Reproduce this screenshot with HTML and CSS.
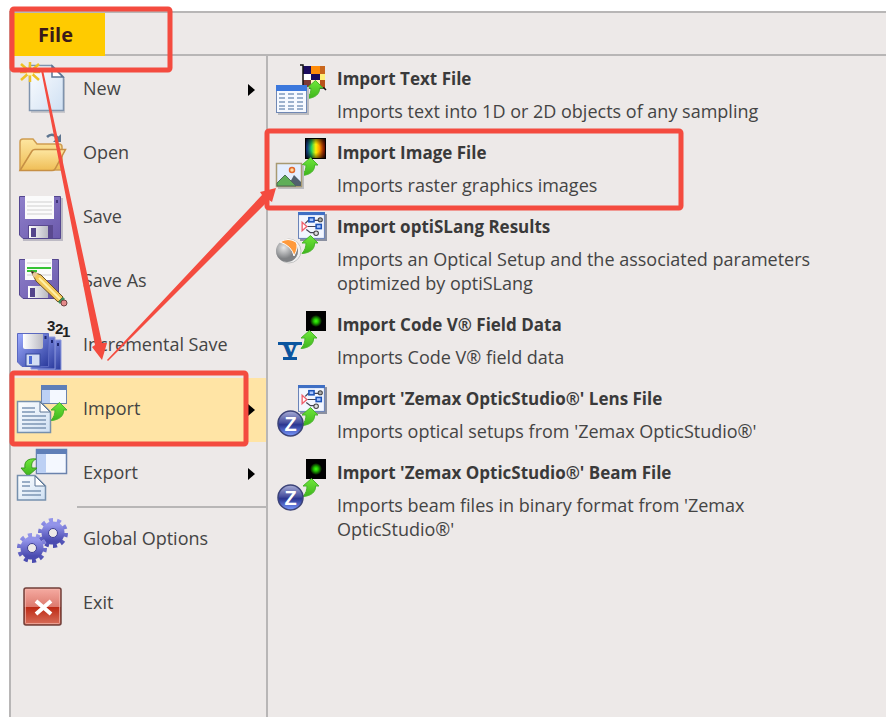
FILE: index.html
```html
<!DOCTYPE html>
<html lang="en">
<head>
  <meta charset="UTF-8" />
  <meta name="viewport" content="width=device-width, initial-scale=1.0"/>
  <title>File menu - Import</title>
  <link rel="stylesheet" href="styles.css">
</head>
<body>

  <!-- shared icon parts -->
  <svg class="defs" width="0" height="0" aria-hidden="true">
    <defs>
      <linearGradient id="green" x1="0" y1="0" x2="0" y2="1"><stop offset="0" stop-color="#6fe83a"/><stop offset="1" stop-color="#3fb41c"/></linearGradient>
      <linearGradient id="paper" x1="0" y1="0" x2="1" y2="1"><stop offset="0" stop-color="#fdfeff"/><stop offset="1" stop-color="#cfe0f3"/></linearGradient>
      <linearGradient id="folder" x1="0" y1="0" x2="0" y2="1"><stop offset="0" stop-color="#fde6a0"/><stop offset="1" stop-color="#efbd55"/></linearGradient>
      <linearGradient id="purple" x1="0" y1="0" x2="1" y2="1"><stop offset="0" stop-color="#8f80cb"/><stop offset="1" stop-color="#6a59ab"/></linearGradient>
      <linearGradient id="blue" x1="0" y1="0" x2="1" y2="1"><stop offset="0" stop-color="#9fadff"/><stop offset="1" stop-color="#2a3a9c"/></linearGradient>
      <linearGradient id="metal" x1="0" y1="0" x2="1" y2="0"><stop offset="0" stop-color="#ffffff"/><stop offset="1" stop-color="#b9b9c2"/></linearGradient>
      <linearGradient id="gearFill" x1="0" y1="0" x2="0" y2="1"><stop offset="0" stop-color="#9394ea"/><stop offset="1" stop-color="#4a4bb0"/></linearGradient>
      <linearGradient id="red" x1="0" y1="0" x2="0" y2="1"><stop offset="0" stop-color="#f6aca3"/><stop offset=".5" stop-color="#dd7b6f"/><stop offset=".52" stop-color="#bd2a15"/><stop offset="1" stop-color="#d9705c"/></linearGradient>
      <linearGradient id="zFill" x1="0" y1="0" x2="0" y2="1"><stop offset="0" stop-color="#a9aed6"/><stop offset=".45" stop-color="#4a52a0"/><stop offset=".55" stop-color="#2b3590"/><stop offset="1" stop-color="#7a9aff"/></linearGradient>
      <linearGradient id="rainbow" x1="0" y1="0" x2="1" y2="0"><stop offset="0" stop-color="#1b3fd8"/><stop offset=".28" stop-color="#1fd060"/><stop offset=".52" stop-color="#fff000"/><stop offset=".75" stop-color="#ff8a00"/><stop offset="1" stop-color="#d01800"/></linearGradient>
      <radialGradient id="vignette" r=".68"><stop offset=".3" stop-color="#000" stop-opacity="0"/><stop offset="1" stop-color="#000"/></radialGradient>
      <radialGradient id="glow"><stop offset="0" stop-color="#3dff10"/><stop offset=".35" stop-color="#22c400"/><stop offset="1" stop-color="#000"/></radialGradient>
      <radialGradient id="ball" cx=".35" cy=".35"><stop offset="0" stop-color="#e8e8e8"/><stop offset="1" stop-color="#7f8184"/></radialGradient>

      <symbol id="up-arrow" viewBox="0 0 18 19">
        <path d="M1 18.500C4 15 5 12 5 8H1L9.500 .5L17 8H13.500C14 14 9 18 1 18.500Z" fill="url(#green)" stroke="#48b52c" stroke-width="1"/>
      </symbol>
      <symbol id="spot" viewBox="0 0 20 20">
        <rect width="20" height="20" fill="#000"/>
        <circle cx="10" cy="10" r="6" fill="url(#glow)"/>
      </symbol>
      <symbol id="z-ball" viewBox="0 0 27 27">
        <circle cx="13.5" cy="13.5" r="12.5" fill="url(#zFill)" stroke="#3c4378" stroke-width="1.5"/>
        <text x="13.5" y="21" text-anchor="middle" class="z-letter">Z</text>
      </symbol>
      <symbol id="setup" viewBox="0 0 28 28">
        <rect x="2" y="2" width="26" height="26" fill="#8b90a0"/>
        <rect x=".5" y=".5" width="25" height="25" fill="#f2f6ff" stroke="#6b84b8"/>
        <rect width="26" height="3" fill="#3f6fc4"/>
        <path d="M7 11L10 8H20M9 14H20M8 17L12 20H17" fill="none" stroke="#445" stroke-width="1.2"/>
        <path d="M4 10V18L8.500 14Z" fill="#fff" stroke="#f0606c" stroke-width="1.3"/>
        <rect x="10.500" y="5.500" width="5" height="4" fill="#a9c6ff" stroke="#1c53b8" stroke-width="1.5"/>
        <rect x="17.500" y="12" width="5" height="4" fill="#a9c6ff" stroke="#1c53b8" stroke-width="1.5"/>
        <circle cx="21.5" cy="7.500" r="2" fill="#aaa" stroke="#444"/>
        <circle cx="17.5" cy="20.5" r="2.200" fill="#ddd" stroke="#444"/>
      </symbol>
      <symbol id="blue-disk" viewBox="0 0 32 34">
        <path d="M.5.5H31.5V33.5H5L.5 29Z" fill="url(#blue)" stroke="#5a68c0"/>
        <path d="M6 1H26V14Q26 16 24 16H8Q6 16 6 14Z" fill="url(#metal)"/>
        <rect x="27.500" y="3" width="2" height="3" fill="#1c2670"/>
        <rect x="9" y="21" width="14" height="12" fill="#d3def4" stroke="#35489c"/>
        <rect x="12" y="23" width="3" height="8" fill="#4c6bd6"/>
      </symbol>
      <symbol id="gear" viewBox="0 0 32 32">
        <circle cx="16" cy="16" r="12.5" fill="none" stroke="url(#gearFill)" stroke-width="5" pathLength="100" stroke-dasharray="5 5"/>
        <circle cx="16" cy="16" r="8" fill="none" stroke="url(#gearFill)" stroke-width="7"/>
        <circle cx="16" cy="16" r="4.5" fill="none" stroke="#3e3f94" stroke-width="1"/>
      </symbol>
    </defs>
  </svg>

  <div class="window">
    <header class="tab-bar">
      <button class="file-tab" type="button">File</button>
    </header>

    <div class="menu">
      <nav class="commands">
        <button class="command" type="button">
          <svg class="icon" viewBox="0 0 60 64">
            <path d="M18 9H40L52 21V55H18Z" fill="#c9c8cc"/>
            <path d="M16.500 7.500H39L50.500 19V52.500H16.500Z" fill="url(#paper)" stroke="#7f93ad" stroke-width="1.500"/>
            <path d="M39 8V19H50Z" fill="#fff" stroke="#5c7594" stroke-width="1.500"/>
            <path d="M17 4V24M7 14H27M8 6L26 22M26 6L8 22" stroke="#eec125" stroke-width="2.500"/>
            <circle cx="17" cy="14" r="3.500" fill="#fff6b8"/>
          </svg>
          <span class="label">New</span>
          <span class="more"></span>
        </button>
        <button class="command" type="button">
          <svg class="icon" viewBox="0 0 60 64">
            <path d="M7 48V20Q7 17 10 17H20L24 22H46Q49 22 49 25V48Z" fill="url(#folder)" stroke="#cf9d52" stroke-width="1.500"/>
            <path d="M7 48.500L19 29Q20 27.500 22 27.500H52.500L42 47Q41 48.500 39 48.500Z" fill="url(#folder)" stroke="#c79045" stroke-width="1.500"/>
            <path d="M34 15Q39 10 45 16" fill="none" stroke="#5d7590" stroke-width="2.500"/>
            <path d="M48 12V20H40Z" fill="#5d7590"/>
          </svg>
          <span class="label">Open</span>
        </button>
        <button class="command" type="button">
          <svg class="icon" viewBox="0 0 60 64">
            <path d="M8 12H50V55H10Z" fill="#bdbac4"/>
            <path d="M6.500 10.500H47.500V52.500H10L6.500 49Z" fill="url(#purple)" stroke="#54468f"/>
            <rect x="12" y="10" width="29" height="23" fill="#fbfbfb"/>
            <path d="M14 16H39M14 20H39M14 24H39M14 28H39" stroke="#cfcfcf"/>
            <rect x="15" y="39" width="25" height="13" fill="#5a498f"/>
            <rect x="16" y="40" width="19" height="12" fill="url(#metal)"/>
            <rect x="18" y="42" width="5" height="9" fill="#54458c"/>
            <rect x="43" y="14" width="2" height="3" fill="#41357a"/>
          </svg>
          <span class="label">Save</span>
        </button>
        <button class="command" type="button">
          <svg class="icon" viewBox="0 0 60 64">
            <path d="M6.500 9.500H45.500V48.500H10L6.500 45Z" fill="url(#purple)" stroke="#54468f"/>
            <rect x="12" y="9" width="27" height="21" fill="#fbfbfb"/>
            <path d="M14 13H38M14 25H38" stroke="#cfcfcf"/>
            <path d="M14 18H38M14 21H24" stroke="#35c335" stroke-width="2"/>
            <rect x="15" y="36" width="20" height="12" fill="url(#metal)"/>
            <rect x="17" y="38" width="5" height="9" fill="#54458c"/>
            <path d="M18 21L28 25L50 47L45 52L23 31Z" fill="#f3c95b" stroke="#6b5126"/>
            <path d="M26 28L47 49" stroke="#fff0a8" stroke-width="2"/>
            <path d="M18 21L25 23.500L21 28Z" fill="#e9c89a"/>
            <path d="M18 21L21 22L19.500 24Z" fill="#222"/>
            <path d="M45 52L50 47L52 49L47 54Z" fill="#3d8f5a"/>
            <circle cx="51" cy="53" r="3" fill="#e58a8a" stroke="#6e4040"/>
          </svg>
          <span class="label">Save As</span>
        </button>
        <button class="command" type="button">
          <svg class="icon" viewBox="0 0 60 64">
            <path d="M25 26H48V56H25Z" fill="url(#blue)" stroke="#8d99dc"/>
            <path d="M18 23H42V55H18Z" fill="url(#blue)" stroke="#8d99dc"/>
            <path d="M45 29V32M39 26V29" stroke="#1c2670" stroke-width="2"/>
            <use href="#blue-disk" x="4" y="19" width="32" height="34"/>
            <text x="34" y="17" class="digit">3</text>
            <text x="42" y="20" class="digit">2</text>
            <text x="49" y="23" class="digit">1</text>
          </svg>
          <span class="label">Incremental Save</span>
        </button>
        <button class="command active" type="button">
          <svg class="icon" viewBox="0 0 60 64">
            <rect x="28.500" y="7.500" width="25" height="18" fill="#f4f8ff" stroke="#6a82ad"/>
            <rect x="28" y="7" width="26" height="5" fill="#5f7fb8"/>
            <rect x="29" y="12" width="8" height="13" fill="#bcd0f4"/>
            <use href="#up-arrow" x="37" y="24" width="18" height="19"/>
            <path d="M4.500 23.500H27L37.500 34V54.500H4.500Z" fill="url(#paper)" stroke="#7690ad" stroke-width="1.500"/>
            <path d="M27 24V34H37Z" fill="#fff" stroke="#5c7594"/>
            <path d="M9 30H22M9 34H22M9 38H33M9 42H33M9 46H33M9 50H33" stroke="#7c95b4" stroke-width="1.500"/>
          </svg>
          <span class="label">Import</span>
          <span class="more"></span>
        </button>
        <button class="command" type="button">
          <svg class="icon" viewBox="0 0 60 64">
            <rect x="23.500" y="7.500" width="30" height="24" fill="#f4f8ff" stroke="#6a82ad" stroke-width="1.500"/>
            <rect x="23" y="7" width="31" height="5" fill="#5f7fb8"/>
            <rect x="24" y="12" width="9" height="19" fill="#bcd0f4"/>
            <path d="M23 17C14 16 11 20 12 26H8L15 34L24 26H19C18 22 19 19 23 17Z" fill="url(#green)" stroke="#3a9a22"/>
            <path d="M4.500 33.500H22L32.500 44V58H4.500Z" fill="url(#paper)" stroke="#7690ad" stroke-width="1.500"/>
            <path d="M22 34V44H32Z" fill="#fff" stroke="#5c7594"/>
            <path d="M9 40H17M9 44H17M9 49H28M9 53H28" stroke="#7c95b4" stroke-width="1.500"/>
          </svg>
          <span class="label">Export</span>
          <span class="more"></span>
        </button>
        <hr class="divider">
        <button class="command" type="button">
          <svg class="icon" viewBox="0 0 60 64">
            <use href="#gear" x="24" y="9" width="32" height="32"/>
            <use href="#gear" x="3" y="24" width="32" height="32"/>
          </svg>
          <span class="label">Global Options</span>
        </button>
        <button class="command" type="button">
          <svg class="icon" viewBox="0 0 60 64">
            <rect x="11" y="16" width="37" height="37" rx="2" fill="url(#red)" stroke="#71403a" stroke-width="1.500"/>
            <rect x="12.500" y="17.500" width="34" height="34" rx="1" fill="none" stroke="#f3b6ad" stroke-opacity=".7"/>
            <path d="M23 29L38 42M38 29L23 42" stroke="#fff" stroke-width="4"/>
          </svg>
          <span class="label">Exit</span>
        </button>
      </nav>

      <section class="imports">
        <button class="entry" type="button">
          <svg class="icon" viewBox="0 0 60 64">
            <rect x="31" y="8" width="8" height="8" fill="#1b0c5e"/>
            <rect x="39" y="8" width="9" height="8" fill="#ff8c0a"/>
            <rect x="48" y="8" width="5" height="8" fill="#c9661c"/>
            <rect x="31" y="16" width="8" height="6" fill="#fff"/>
            <rect x="39" y="16" width="9" height="6" fill="#1b0c5e"/>
            <rect x="48" y="16" width="5" height="6" fill="#fff07a"/>
            <rect x="31" y="22" width="8" height="8" fill="#7d3a34"/>
            <rect x="39" y="22" width="9" height="8" fill="#fff3c4"/>
            <rect x="48" y="22" width="5" height="8" fill="#b9541c"/>
            <path d="M28 7H31V28M31 30H52L54 32" fill="none" stroke="#111" stroke-width="1.500"/>
            <use href="#up-arrow" x="34" y="22" width="18" height="19"/>
            <rect x="6" y="29" width="31" height="28" fill="#bcbcc0"/>
            <rect x="4.500" y="27.500" width="30" height="27" fill="#f6f9ff" stroke="#7088b4"/>
            <rect x="4" y="27" width="31" height="6" fill="#3c78dc"/>
            <path d="M7 36H13M16 36H22M25 36H31M7 40H13M16 40H22M25 40H31M7 44H13M16 44H22M25 44H31M7 48H13M16 48H22M25 48H31M7 51H13M16 51H22M25 51H31" stroke="#7f99bd" stroke-width="1.500"/>
          </svg>
          <span class="entry-text">
            <strong class="entry-title">Import Text File</strong>
            <span class="entry-info">Imports text into 1D or 2D objects of any sampling</span>
          </span>
        </button>
        <button class="entry" type="button">
          <svg class="icon" viewBox="0 0 60 64">
            <rect x="33" y="6" width="21" height="21" fill="#000"/>
            <rect x="34" y="7" width="19" height="19" fill="url(#rainbow)"/>
            <rect x="33" y="6" width="21" height="21" fill="url(#vignette)"/>
            <use href="#up-arrow" x="29" y="25" width="18" height="19"/>
            <rect x="6" y="33" width="26" height="24" fill="#bcbcc0"/>
            <rect x="4.500" y="31.500" width="25" height="23" fill="#e4eeff" stroke="#a89a72" stroke-width="1.500"/>
            <circle cx="20" cy="38" r="2.500" fill="#ffd9a0" stroke="#e0662c" stroke-width="1.500"/>
            <path d="M16 54L22 43L29 50V54Z" fill="#51606e"/>
            <path d="M5 51L13 43L24 54H5Z" fill="#5fae58" stroke="#4c6b58"/>
          </svg>
          <span class="entry-text">
            <strong class="entry-title">Import Image File</strong>
            <span class="entry-info">Imports raster graphics images</span>
          </span>
        </button>
        <button class="entry" type="button">
          <svg class="icon" viewBox="0 0 60 64">
            <use href="#setup" x="26" y="6" width="29" height="29"/>
            <use href="#up-arrow" x="29" y="29" width="18" height="19"/>
            <circle cx="17" cy="45" r="12" fill="#f1f1f1" stroke="#c4c4c4"/>
            <circle cx="15" cy="45" r="11" fill="url(#ball)"/>
            <path d="M8 36Q16 31 24 36Q27 41 22 50Q20 40 8 36Z" fill="#ff9a3c" stroke="#fff"/>
          </svg>
          <span class="entry-text">
            <strong class="entry-title">Import optiSLang Results</strong>
            <span class="entry-info">Imports an Optical Setup and the associated parameters optimized by optiSLang</span>
          </span>
        </button>
        <button class="entry" type="button">
          <svg class="icon" viewBox="0 0 60 64">
            <use href="#spot" x="34" y="7" width="20" height="20"/>
            <use href="#up-arrow" x="28" y="26" width="18" height="19"/>
            <rect x="6" y="38" width="24" height="3" fill="#0b559f"/>
            <rect x="11" y="53" width="14" height="3" fill="#0b559f"/>
            <text x="18" y="54" text-anchor="middle" class="v-letter">V</text>
          </svg>
          <span class="entry-text">
            <strong class="entry-title">Import Code V® Field Data</strong>
            <span class="entry-info">Imports Code V® field data</span>
          </span>
        </button>
        <button class="entry" type="button">
          <svg class="icon" viewBox="0 0 60 64">
            <use href="#setup" x="26" y="7" width="29" height="29"/>
            <use href="#up-arrow" x="29" y="29" width="18" height="19"/>
            <use href="#z-ball" x="5" y="32" width="27" height="27"/>
          </svg>
          <span class="entry-text">
            <strong class="entry-title">Import 'Zemax OpticStudio®' Lens File</strong>
            <span class="entry-info">Imports optical setups from 'Zemax OpticStudio®'</span>
          </span>
        </button>
        <button class="entry" type="button">
          <svg class="icon" viewBox="0 0 60 64">
            <use href="#spot" x="34" y="7" width="20" height="20"/>
            <use href="#up-arrow" x="30" y="26" width="18" height="19"/>
            <use href="#z-ball" x="5" y="32" width="27" height="27"/>
          </svg>
          <span class="entry-text">
            <strong class="entry-title">Import 'Zemax OpticStudio®' Beam File</strong>
            <span class="entry-info">Imports beam files in binary format from 'Zemax OpticStudio®'</span>
          </span>
        </button>
      </section>
    </div>
  </div>

  <!-- red guide marks over the menu: File, then Import, then Import Image File -->
  <svg class="marks" width="891" height="724" viewBox="0 0 891 724" aria-hidden="true">
    <rect x="12" y="9" width="158" height="61" rx="2"/>
    <rect x="12" y="373" width="234" height="71" rx="2"/>
    <rect x="267" y="131" width="414" height="77" rx="2"/>
    <path d="M41 70L43 70L102 343L107 343L102 360L92 347L95 345Z"/>
    <path d="M107 360L262 195L260 192L276 188L272 202L269 200L108 361Z"/>
  </svg>

</body>
</html>
```
FILE: styles.css
```css
* {
  box-sizing: border-box;
}
body {
  margin: 0;
  padding: 11px 5px 7px 9px;
  min-height: 100vh;
  display: flex;
  position: relative;
  background: #fff;
  font-family: "Open Sans", "Noto Sans", sans-serif;
  font-size: 18px;
  line-height: 24px;
  color: #444;
}
button {
  border: none;
  background: none;
  padding: 0;
  font: inherit;
  color: inherit;
  text-align: left;
  cursor: pointer;
}
.defs {
  position: absolute;
}
.window {
  flex: 1;
  display: flex;
  flex-direction: column;
  background: #ede9e8;
  border-top: 2px solid #b8b6b6;
  border-left: 2px solid #b8b6b6;
}
.tab-bar {
  display: flex;
  height: 43px;
  padding-left: 3px;
  border-bottom: 2px solid #b8b6b6;
}
.file-tab {
  width: 91px;
  height: 43px;
  padding-left: 24px;
  background: #ffcb00;
  color: #3a1a1a;
  font-size: 20px;
  font-weight: 700;
}
.menu {
  flex: 1;
  display: flex;
}
.commands {
  width: 257px;
  padding-top: 2px;
  border-right: 2px solid #b8b6b6;
}
.command {
  display: flex;
  align-items: center;
  width: 100%;
  height: 64px;
  padding-left: 2px;
  padding-right: 11px;
}
.command.active {
  background: #ffe4a5;
}
.icon {
  flex: none;
  width: 60px;
  height: 64px;
}
.label {
  flex: 1;
  padding-left: 10px;
  padding-bottom: 4px;
}
.more {
  border-left: 7px solid #000;
  border-top: 6px solid transparent;
  border-bottom: 6px solid transparent;
}
.divider {
  height: 2px;
  margin: 0 0 0 66px;
  border: none;
  background: #b8b6b6;
}
.imports {
  flex: 1;
  padding-top: 2px;
  padding-left: 4px;
}
.entry {
  display: flex;
  align-items: flex-start;
  width: 100%;
}
.entry-text {
  display: flex;
  flex-direction: column;
  gap: 8px;
  max-width: 500px;
  padding: 9px 0 9px 5px;
}
.entry-title {
  font-size: 17px;
  font-weight: 700;
  color: #3a3a3a;
}
.digit {
  font: 700 15px "Liberation Sans", sans-serif;
  fill: #222;
}
.z-letter {
  font: 700 20px "Liberation Sans", sans-serif;
  fill: #fff;
}
.v-letter {
  font: 700 20px "Liberation Serif", serif;
  fill: #0b559f;
  stroke: #0b559f;
}
.marks {
  position: absolute;
  top: 0;
  left: 0;
  pointer-events: none;
}
.marks rect {
  fill: none;
  stroke: #f44b3f;
  stroke-width: 5;
}
.marks path {
  fill: #f44b3f;
}
```
